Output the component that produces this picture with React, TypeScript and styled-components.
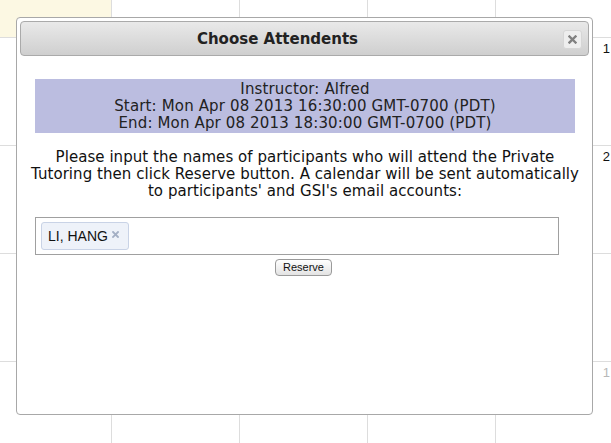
import React from "react";
import styled, { createGlobalStyle } from "styled-components";

const Global = createGlobalStyle`
  html, body { margin: 0; padding: 0; background: #fff; overflow: hidden; }
  * { box-sizing: border-box; }
`;

const Page = styled.div`
  position: relative;
  width: 611px;
  height: 443px;
  overflow: hidden;
`;

const Calendar = styled.div`
  display: grid;
  grid-template-columns: repeat(5, 128px);
  grid-auto-rows: 108px;
  margin-left: -16px;
  margin-top: -70px;
  width: max-content;
`;

const Cell = styled.div<{ $today?: boolean; $muted?: boolean }>`
  border-right: 1px solid #dddddd;
  border-bottom: 1px solid #dddddd;
  background: ${(p) => (p.$today ? "#fcf8e3" : "#fff")};
  text-align: right;
  padding: 3px 13px 0 0;
  font-family: "Liberation Sans", Arial, sans-serif;
  font-size: 13px;
  line-height: 15px;
  color: ${(p) => (p.$muted ? "#b8b8b8" : "#111")};
`;

const Dialog = styled.div`
  position: absolute;
  left: 16px;
  top: 17px;
  width: 577px;
  height: 398px;
  border: 1px solid #a8a8a8;
  border-radius: 4px;
  background: #fff;
  padding: 3px;
  display: flex;
  flex-direction: column;
  font-family: "DejaVu Sans", Verdana, sans-serif;
  color: #222;
`;

const TitleBar = styled.div`
  position: relative;
  height: 35px;
  border: 1px solid #aaaaaa;
  border-radius: 4px;
  background: linear-gradient(#e9e9e9, #cfcfcf);
  display: flex;
  align-items: center;
  justify-content: center;
  padding-right: 54px;
`;

const Title = styled.span`
  font-weight: bold;
  font-size: 15px;
  color: #222;
`;

const CloseButton = styled.button`
  position: absolute;
  right: 6px;
  top: 8px;
  width: 19px;
  height: 19px;
  padding: 0;
  border: 1px solid #d6d6d6;
  border-radius: 3px;
  background: #eeeeee;
  display: flex;
  align-items: center;
  justify-content: center;
`;

const Content = styled.div`
  display: flex;
  flex-direction: column;
  padding: 23px 14px 0 15px;
`;

const InfoBox = styled.div`
  background: #bbbde0;
  text-align: center;
  font-size: 15px;
  letter-spacing: 0.15px;
  line-height: 17px;
  padding: 2px 0 1px;
  color: #222;
`;

const Message = styled.p`
  margin: 16px -4px 0;
  text-align: center;
  font-size: 15px;
  letter-spacing: 0.05px;
  line-height: 17px;
  color: #111;
`;

const TagInput = styled.div`
  margin-top: 17px;
  width: 524px;
  height: 38px;
  border: 1px solid #a0a0a0;
  padding: 4px 5px;
  display: flex;
  align-items: center;
`;

const Tag = styled.span`
  display: inline-flex;
  align-items: center;
  height: 28px;
  padding: 0 9px 0 6px;
  border: 1px solid #c9d3e6;
  border-radius: 3px;
  background: #eef2f9;
  font-family: "Liberation Sans", Arial, sans-serif;
  font-size: 14px;
  color: #111;
  gap: 4px;
`;

const TagRemove = styled.span`
  display: inline-flex;
  align-items: center;
  margin-top: -3px;
`;

const Actions = styled.div`
  display: flex;
  justify-content: center;
  margin-top: 4px;
  padding-right: 3px;
`;

const ReserveButton = styled.button`
  height: 17px;
  width: 57px;
  padding: 0;
  border: 1px solid #9a9a9a;
  border-radius: 4px;
  background: linear-gradient(#ffffff, #e3e3e3);
  font-family: "Liberation Sans", Arial, sans-serif;
  font-size: 11px;
  line-height: 15px;
  color: #111;
`;

const rows = [
  ["", "", "", "", ""],
  ["", "", "", "", "1"],
  ["", "", "", "", "2"],
  ["", "", "", "", ""],
  ["", "", "", "", "1"],
];

export default function App() {
  return (
    <Page>
      <Global />
      <Calendar>
        {rows.map((r, ri) =>
          r.map((n, ci) => (
            <Cell key={`${ri}-${ci}`} $today={ri === 0 && ci === 0} $muted={ri === 4}>
              {n}
            </Cell>
          ))
        )}
      </Calendar>
      <Dialog>
        <TitleBar>
          <Title>Choose Attendents</Title>
          <CloseButton aria-label="close">
            <svg width="9" height="9" viewBox="0 0 9 9">
              <path d="M1.5 1.5 L7.5 7.5 M7.5 1.5 L1.5 7.5" stroke="#808080" strokeWidth="2.4" strokeLinecap="square" />
            </svg>
          </CloseButton>
        </TitleBar>
        <Content>
          <InfoBox>
            <div>Instructor: Alfred</div>
            <div>Start: Mon Apr 08 2013 16:30:00 GMT-0700 (PDT)</div>
            <div>End: Mon Apr 08 2013 18:30:00 GMT-0700 (PDT)</div>
          </InfoBox>
          <Message>
            Please input the names of participants who will attend the Private Tutoring then click Reserve button. A calendar will be sent automatically to participants' and GSI's email accounts:
          </Message>
          <TagInput>
            <Tag>
              LI, HANG
              <TagRemove>
                <svg width="7" height="7" viewBox="0 0 7 7">
                  <path d="M1 1 L6 6 M6 1 L1 6" stroke="#a3afc4" strokeWidth="1.8" strokeLinecap="square" />
                </svg>
              </TagRemove>
            </Tag>
          </TagInput>
          <Actions>
            <ReserveButton>Reserve</ReserveButton>
          </Actions>
        </Content>
      </Dialog>
    </Page>
  );
}
